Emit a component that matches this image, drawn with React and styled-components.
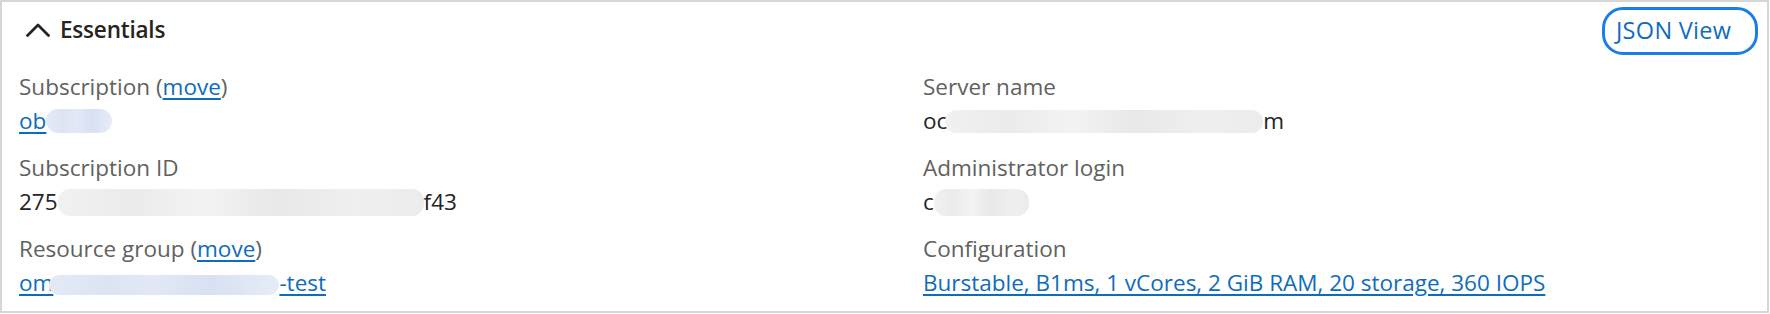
import React from "react";
import styled, { createGlobalStyle } from "styled-components";

const Global = createGlobalStyle`
  html, body { margin: 0; padding: 0; background: #ffffff; }
  body { font-family: "Open Sans", "Noto Sans", Arial, sans-serif; }
`;

const Panel = styled.section`
  box-sizing: border-box;
  width: 1769px;
  height: 313px;
  border: 2px solid #d6d6d6;
  background: #ffffff;
  padding: 5px 9px 0 17px;
  display: flex;
  flex-direction: column;
`;

const Header = styled.header`
  display: flex;
  align-items: center;
  justify-content: space-between;
  height: 48px;
`;

const Toggle = styled.div`
  display: flex;
  align-items: center;
  gap: 10px;
  padding-left: 7px;
  margin-top: -3px;
`;

const Title = styled.h2`
  margin: 0;
  font-size: 22.5px;
  font-weight: 600;
  color: #242424;
  letter-spacing: -0.2px;
`;

const JsonButton = styled.button`
  box-sizing: border-box;
  height: 48px;
  width: 156px;
  border: 3px solid #1a7ee8;
  border-radius: 21px;
  background: #ffffff;
  color: #0f6cbd;
  font-family: inherit;
  font-size: 23.5px;
  letter-spacing: 0.3px;
  text-align: left;
  padding: 0 0 2px 11px;
  cursor: pointer;
`;

const Grid = styled.div`
  display: grid;
  grid-template-columns: 832px 1fr;
  column-gap: 72px;
  row-gap: 13px;
  margin-top: 15px;
`;

const Field = styled.div`
  display: flex;
  flex-direction: column;
`;

const Label = styled.div`
  font-size: 22.5px;
  line-height: 34px;
  color: #616161;
  white-space: nowrap;
`;

const Value = styled.div`
  font-size: 22.5px;
  line-height: 34px;
  color: #242424;
  white-space: nowrap;
  display: flex;
  align-items: center;
`;

const Link = styled.a`
  color: #0f6cbd;
  text-decoration: underline;
  text-underline-offset: 3px;
  cursor: pointer;
`;

const Redact = styled.span`
  display: inline-block;
  width: ${(p) => p.$w}px;
  height: ${(p) => p.$h}px;
  margin-left: ${(p) => p.$overlap || 0}px;
  border-radius: 12px;
  vertical-align: middle;
  background: ${(p) =>
    p.$blue
      ? "linear-gradient(90deg, #e4eaf6 0%, #dce4f3 25%, #e2e8f5 45%, #d8e1f2 70%, #e6ecf7 100%)"
      : "linear-gradient(90deg, #f1f1f1 0%, #ebebeb 20%, #f3f3f3 40%, #e8e8e8 60%, #efefef 80%, #ececec 100%)"};
`;

const Chevron = () => (
  <svg width="24" height="14" viewBox="0 0 24 14" aria-hidden="true">
    <polyline points="1.5,12.5 12,2 22.5,12.5" fill="none" stroke="#242424" strokeWidth="2.8" strokeLinecap="round" strokeLinejoin="round" />
  </svg>
);

export default function App() {
  return (
    <>
      <Global />
      <Panel>
        <Header>
          <Toggle>
            <Chevron />
            <Title>Essentials</Title>
          </Toggle>
          <JsonButton>JSON View</JsonButton>
        </Header>
        <Grid>
          <Field>
            <Label>
              Subscription (<Link>move</Link>)
            </Label>
            <Value>
              <Link>ob</Link>
              <Redact $w={66} $h={24} $blue />
            </Value>
          </Field>
          <Field>
            <Label>Server name</Label>
            <Value>
              oc
              <Redact $w={318} $h={23} $overlap={-2} />
              m
            </Value>
          </Field>
          <Field>
            <Label>Subscription ID</Label>
            <Value>
              275
              <Redact $w={366} $h={27} />
              f43
            </Value>
          </Field>
          <Field>
            <Label>Administrator login</Label>
            <Value>
              c
              <Redact $w={95} $h={27} />
            </Value>
          </Field>
          <Field>
            <Label>
              Resource group (<Link>move</Link>)
            </Label>
            <Value>
              <Link>
                om
                <Redact $w={230} $h={20} $overlap={-4} $blue />
                -test
              </Link>
            </Value>
          </Field>
          <Field>
            <Label>Configuration</Label>
            <Value>
              <Link>Burstable, B1ms, 1 vCores, 2 GiB RAM, 20 storage, 360 IOPS</Link>
            </Value>
          </Field>
        </Grid>
      </Panel>
    </>
  );
}
